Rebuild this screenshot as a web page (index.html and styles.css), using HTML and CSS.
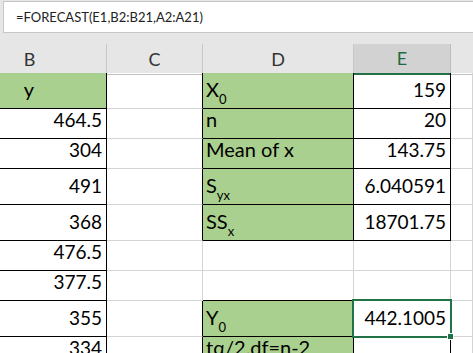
FILE: index.html
```html
<!DOCTYPE html>
<html lang="en">
<head>
    <meta charset="UTF-8">
    <title>FORECAST worksheet</title>
    <link rel="stylesheet" href="styles.css">
</head>
<body>
    <div class="fbar">
        <div class="fbox">=FORECAST(E1,B2:B21,A2:A21)</div>
    </div>

    <div class="heads">
        <div class="hd">B</div>
        <div class="hd">C</div>
        <div class="hd">D</div>
        <div class="hd sel">E</div>
        <div class="hd last"></div>
    </div>

    <div class="sheet">
        <!-- row 1 -->
        <div class="c bk green center">y</div>
        <div class="c edge"></div>
        <div class="c bk green">X<sub>0</sub></div>
        <div class="c bk num">159</div>
        <div class="c"></div>
        <!-- row 2 -->
        <div class="c bk num">464.5</div>
        <div class="c edge"></div>
        <div class="c bk green">n</div>
        <div class="c bk num">20</div>
        <div class="c"></div>
        <!-- row 3 -->
        <div class="c bk num">304</div>
        <div class="c edge"></div>
        <div class="c bk green">Mean of x</div>
        <div class="c bk num">143.75</div>
        <div class="c"></div>
        <!-- row 4 -->
        <div class="c bk num">491</div>
        <div class="c edge"></div>
        <div class="c bk green">S<sub>yx</sub></div>
        <div class="c bk num">6.040591</div>
        <div class="c"></div>
        <!-- row 5 -->
        <div class="c bk num">368</div>
        <div class="c edge"></div>
        <div class="c bk green">SS<sub>x</sub></div>
        <div class="c bk num">18701.75</div>
        <div class="c"></div>
        <!-- row 6 -->
        <div class="c bk num">476.5</div>
        <div class="c"></div>
        <div class="c"></div>
        <div class="c"></div>
        <div class="c"></div>
        <!-- row 7 -->
        <div class="c bk num">377.5</div>
        <div class="c"></div>
        <div class="c under"></div>
        <div class="c under"></div>
        <div class="c"></div>
        <!-- row 8 -->
        <div class="c bk num">355</div>
        <div class="c edge"></div>
        <div class="c bk green">Y<sub>0</sub></div>
        <div class="c bk num active">442.1005</div>
        <div class="c"></div>
        <!-- row 9 -->
        <div class="c bk num">334</div>
        <div class="c edge"></div>
        <div class="c bk green">t&alpha;/2,df=n-2</div>
        <div class="c bk"></div>
        <div class="c"></div>
    </div>
</body>
</html>
```

FILE: styles.css
```css
body {
    margin: 0;
    width: 473px;
    height: 353px;
    overflow: hidden;
    background-color: #e6e6e6;
    font-family: Lato, "Open Sans", sans-serif;
    color: #000;
}
.fbar {
    height: 33px;
    padding-left: 3px;
    background-color: #e6e6e6;
    margin-bottom: 10px;
}
.fbox {
    height: 30px;
    margin-top: 1px;
    border: 1px solid #c6c6c6;
    border-right: none;
    background-color: #fff;
    padding-left: 12px;
    font-size: 13px;
    line-height: 30px;
    color: #222;
}
.heads,
.sheet {
    display: grid;
    grid-template-columns: 154px 96px 151px 97px 1fr;
    margin-left: -47px;
}
.heads {
    height: 29px;
}
.hd {
    border-right: 1px solid #c8c8c8;
    border-bottom: 1px solid #c0c0c0;
    text-align: center;
    font-size: 18px;
    line-height: 30px;
    color: #333;
}
.hd.sel {
    background-color: #d2d2d2;
    color: #1e6b40;
    border-right-color: #bdbdbd;
    border-bottom: 2px solid #217346;
    line-height: 29px;
}
.hd.last {
    border-right: none;
}
.sheet {
    grid-template-rows: 36px 30px 30px 36px 36px 30px 30px 36px 30px;
    background-color: #fff;
}
.c {
    display: flex;
    align-items: flex-end;
    border-right: 1px solid #d4d4d4;
    border-bottom: 1px solid #d4d4d4;
    padding: 0 4px 9px 3px;
    font-size: 19px;
    line-height: 1;
    white-space: nowrap;
}
.c.bk {
    border-right-color: #000;
    border-bottom-color: #000;
}
.c.edge {
    border-right-color: #000;
}
.c.under {
    border-bottom-color: #000;
}
.c.green {
    background-color: #a9d08e;
    font-size: 20px;
}
.c.center {
    justify-content: center;
}
.c.num {
    justify-content: flex-end;
}
.c sub {
    font-size: 13px;
    vertical-align: -5px;
    line-height: 0;
}
.c.active {
    position: relative;
}
.c.active::after {
    content: "";
    position: absolute;
    left: -2px;
    top: -2px;
    right: -2px;
    bottom: -2px;
    border: 2px solid #217346;
}
.c.active::before {
    content: "";
    position: absolute;
    right: -4px;
    bottom: -4px;
    width: 5px;
    height: 5px;
    background-color: #217346;
    border: 1px solid #fff;
    z-index: 1;
}
```
